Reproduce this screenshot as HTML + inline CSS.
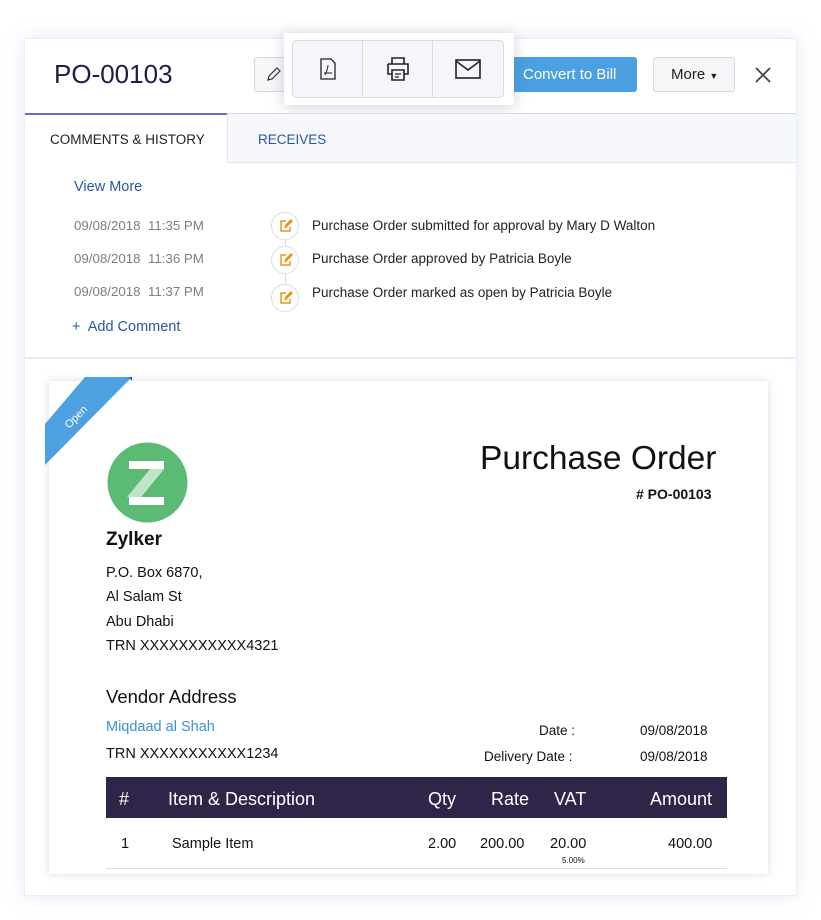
<!DOCTYPE html>
<html><head><meta charset="utf-8"><style>
*{margin:0;padding:0;box-sizing:border-box}
body{width:821px;height:920px;background:#fff;font-family:"Liberation Sans",sans-serif;position:relative;overflow:hidden;color:#222}
.abs{position:absolute}
.card{left:24px;top:38px;width:773px;height:858px;background:#fff;border:1px solid #e8edf6;box-shadow:0 0 18px rgba(180,195,230,.35)}
.btn{border:1px solid #d6d9e2;border-radius:3px;background:#f7f7fa}
.t{white-space:nowrap}
</style></head><body>
<div class="abs card"></div>
<div class="abs t" style="left:54px;top:59px;font-size:26px;color:#1e1d4a">PO-00103</div>
<div class="abs btn" style="left:254px;top:57px;width:40px;height:35px"></div>
<svg class="abs" style="left:266px;top:66px" width="16" height="16" viewBox="0 0 16 16"><path d="M2 14l1-4 8-8 3 3-8 8z" fill="none" stroke="#333" stroke-width="1.2"/></svg>
<div class="abs" style="left:507px;top:57px;width:130px;height:35px;background:#4aa0e0;border-radius:3px;color:#fff;font-size:15px;line-height:35px;padding-left:16px">Convert to Bill</div>
<div class="abs btn" style="left:653px;top:57px;width:82px;height:35px;font-size:15px;line-height:33px;padding-left:17px;color:#222;background:#f6f6f9">More <span style="font-size:9px">&#9660;</span></div>
<svg class="abs" style="left:754px;top:66px" width="18" height="18" viewBox="0 0 18 18"><path d="M2 2l14 14M16 2L2 16" stroke="#444" stroke-width="1.8"/></svg>
<div class="abs" style="left:284px;top:33px;width:230px;height:72px;background:#fff;box-shadow:0 2px 14px rgba(100,110,140,.3)"></div>
<div class="abs" style="left:292px;top:40px;width:212px;height:58px;border:1px solid #d7d8e2;border-radius:5px;background:#f6f6fa;display:flex">
<div style="width:70px;border-right:1px solid #d7d8e2;display:flex;align-items:center;justify-content:center"><svg width="16" height="22" viewBox="0 0 16 22"><path d="M1 1h10l4 4v16H1z" fill="none" stroke="#222" stroke-width="1.3"/><path d="M5 17c2-4 3-7 3-10M4 15h8" fill="none" stroke="#222" stroke-width="1"/></svg></div>
<div style="width:70px;border-right:1px solid #d7d8e2;display:flex;align-items:center;justify-content:center"><svg width="26" height="26" viewBox="0 0 26 26"><path d="M7 8V2h12v6M3 8h20v10h-4M7 18H3V8M7 14h12v10H7z" fill="none" stroke="#222" stroke-width="1.6"/><path d="M10 18h6M10 21h4" stroke="#222" stroke-width="1.3"/></svg></div>
<div style="flex:1;display:flex;align-items:center;justify-content:center"><svg width="26" height="20" viewBox="0 0 26 20"><rect x="1" y="1" width="24" height="18" fill="none" stroke="#222" stroke-width="1.6"/><path d="M1 2l12 9 12-9" fill="none" stroke="#222" stroke-width="1.6"/></svg></div>
</div>
<div class="abs" style="left:25px;top:113px;width:771px;height:1px;background:#d5d8ee"></div>
<div class="abs" style="left:25px;top:113px;width:202px;height:2px;background:#6a6fc0"></div>
<div class="abs" style="left:227px;top:114px;width:569px;height:49px;background:#f7f8fc;border-left:1px solid #e3e6ef;border-bottom:1px solid #e3e6ef"></div>
<div class="abs t" style="left:50px;top:132px;font-size:13.5px;color:#222">COMMENTS &amp; HISTORY</div>
<div class="abs t" style="left:258px;top:132px;font-size:13.5px;color:#2656a6">RECEIVES</div>
<div class="abs t" style="left:74px;top:179px;font-size:14.5px;color:#2656a6">View More</div>
<div class="abs" style="left:285px;top:225px;width:1px;height:70px;background:#d9dce6"></div>
<div class="abs t" style="left:74px;top:218px;font-size:13.3px;color:#7a7f86;line-height:16px">09/08/2018&nbsp;&nbsp;11:35 PM<br><span style="display:block;margin-top:17px">09/08/2018&nbsp;&nbsp;11:36 PM</span><span style="display:block;margin-top:17px">09/08/2018&nbsp;&nbsp;11:37 PM</span></div>
<div class="abs" style="left:271px;top:212px;width:28px;height:28px;border-radius:50%;border:1px solid #d9dce6;background:#fff"></div>
<div class="abs" style="left:271px;top:246px;width:28px;height:28px;border-radius:50%;border:1px solid #d9dce6;background:#fff"></div>
<div class="abs" style="left:271px;top:284px;width:28px;height:28px;border-radius:50%;border:1px solid #d9dce6;background:#fff"></div>
<svg class="abs" style="left:279px;top:219px" width="14" height="14" viewBox="0 0 14 14"><path d="M7 2H2v10h9V8M6 9l1-3 5-5 1 1-5 5z" fill="none" stroke="#e8930c" stroke-width="1.4"/></svg>
<svg class="abs" style="left:279px;top:253px" width="14" height="14" viewBox="0 0 14 14"><path d="M7 2H2v10h9V8M6 9l1-3 5-5 1 1-5 5z" fill="none" stroke="#e8930c" stroke-width="1.4"/></svg>
<svg class="abs" style="left:279px;top:291px" width="14" height="14" viewBox="0 0 14 14"><path d="M7 2H2v10h9V8M6 9l1-3 5-5 1 1-5 5z" fill="none" stroke="#e8930c" stroke-width="1.4"/></svg>
<div class="abs t" style="left:312px;top:218px;font-size:13.5px;color:#222">Purchase Order submitted for approval by Mary D Walton</div>
<div class="abs t" style="left:312px;top:251px;font-size:13.5px;color:#222">Purchase Order approved by Patricia Boyle</div>
<div class="abs t" style="left:312px;top:285px;font-size:13.5px;color:#222">Purchase Order marked as open by Patricia Boyle</div>
<div class="abs t" style="left:72px;top:319px;font-size:14.5px;color:#2656a6">+&nbsp; Add Comment</div>
<div class="abs" style="left:25px;top:357px;width:771px;height:2px;background:#e8eaf2"></div>
<div class="abs" style="left:49px;top:381px;width:719px;height:493px;background:#fff;box-shadow:0 0 8px rgba(150,165,200,.4)"></div>
<svg class="abs" style="left:45px;top:377px" width="90" height="92" viewBox="0 0 90 92"><polygon points="40,0 87,0 0,88 0,47" fill="#4da1e0"/><polygon points="87,0 84,0 87,4" fill="#1d5fa6"/><text x="0" y="0" transform="translate(24,52) rotate(-45)" fill="#fff" font-size="11" font-family="Liberation Sans">Open</text></svg>
<svg class="abs" style="left:107px;top:442px" width="81" height="81" viewBox="0 0 81 81"><circle cx="40.5" cy="40.5" r="40" fill="#5bbb74"/><path d="M22 19h35v8L34 55h23v8H22v-8l23-28H22z" fill="#fff"/><path d="M43 27h14L34 55H20z" fill="#bfe5c9"/></svg>
<div class="abs t" style="left:106px;top:529px;font-size:19px;font-weight:bold;color:#111">Zylker</div>
<div class="abs t" style="left:106px;top:561px;font-size:14.5px;line-height:24.3px;color:#111">P.O. Box 6870,<br>Al Salam St<br>Abu Dhabi<br>TRN XXXXXXXXXXX4321</div>
<div class="abs t" style="left:480px;top:440px;font-size:33.5px;color:#111">Purchase Order</div>
<div class="abs t" style="left:636px;top:486px;font-size:14px;font-weight:bold;color:#111"># PO-00103</div>
<div class="abs t" style="left:106px;top:686px;font-size:18.5px;color:#111">Vendor Address</div>
<div class="abs t" style="left:106px;top:719px;font-size:14.5px;color:#3d8fd6">Miqdaad al Shah</div>
<div class="abs t" style="left:106px;top:746px;font-size:14.5px;color:#111">TRN XXXXXXXXXXX1234</div>
<div class="abs t" style="left:539px;top:723px;font-size:13.5px;color:#111">Date :</div>
<div class="abs t" style="left:484px;top:749px;font-size:13.5px;color:#111">Delivery Date :</div>
<div class="abs t" style="left:640px;top:723px;font-size:13.5px;color:#111">09/08/2018</div>
<div class="abs t" style="left:640px;top:749px;font-size:13.5px;color:#111">09/08/2018</div>
<div class="abs" style="left:106px;top:777px;width:621px;height:41px;background:#2e2549"></div>
<div class="abs t" style="left:119px;top:789px;font-size:18px;color:#fff">#</div>
<div class="abs t" style="left:168px;top:789px;font-size:18px;color:#fff">Item &amp; Description</div>
<div class="abs t" style="left:428px;top:789px;font-size:18px;color:#fff">Qty</div>
<div class="abs t" style="left:491px;top:789px;font-size:18px;color:#fff">Rate</div>
<div class="abs t" style="left:554px;top:789px;font-size:18px;color:#fff">VAT</div>
<div class="abs t" style="left:650px;top:789px;font-size:18px;color:#fff">Amount</div>
<div class="abs t" style="left:121px;top:836px;font-size:14.5px;color:#111">1</div>
<div class="abs t" style="left:172px;top:836px;font-size:14.5px;color:#111">Sample Item</div>
<div class="abs t" style="left:428px;top:836px;font-size:14.5px;color:#111">2.00</div>
<div class="abs t" style="left:480px;top:836px;font-size:14.5px;color:#111">200.00</div>
<div class="abs t" style="left:550px;top:836px;font-size:14.5px;color:#111">20.00</div>
<div class="abs t" style="left:562px;top:856px;font-size:8px;color:#111">5.00%</div>
<div class="abs t" style="left:668px;top:836px;font-size:14.5px;color:#111">400.00</div>
<div class="abs" style="left:106px;top:868px;width:621px;height:1px;background:#ddd"></div>
</body></html>
